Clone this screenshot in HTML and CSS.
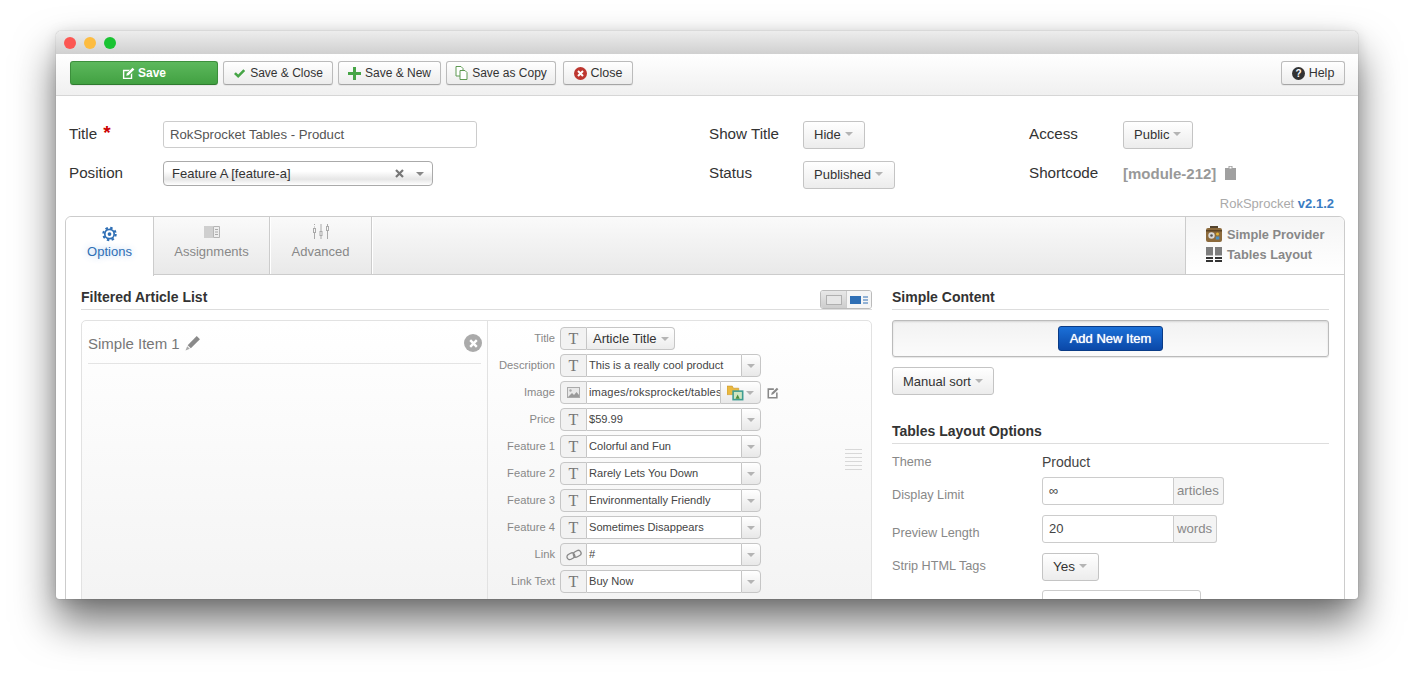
FILE: index.html
```html
<!DOCTYPE html>
<html lang="en">
<head>
<meta charset="utf-8">
<title>RokSprocket</title>
<link rel="stylesheet" href="styles.css">
</head>
<body>
<div class="window">
  <div class="titlebar"><i class="dot red"></i><i class="dot yellow"></i><i class="dot green"></i></div>
  <div class="toolbar">
    <button class="btn save"><svg width="13" height="13" viewBox="0 0 14 14"><path d="M1 3h7.500L7 4.500H2.500v7h7V8L11 6.500V13H1z" fill="#fff"/><path d="M11.400.8l1.900 1.900-6.200 6.200-2.500.6.600-2.500z" fill="#fff"/></svg>Save</button>
    <button class="btn w-sc"><svg width="13" height="11" viewBox="0 0 14 12"><path d="M1 6.500L3 4.500l2.600 2.600L11.200 1.300l2 2-7.600 7.700z" fill="#46a546"/></svg>Save &amp; Close</button>
    <button class="btn w-sn"><svg width="13" height="13" viewBox="0 0 13 13"><path d="M5 0h3v5h5v3H8v5H5V8H0V5h5z" fill="#46a546"/></svg>Save &amp; New</button>
    <button class="btn w-cp"><svg width="13" height="14" viewBox="0 0 13 14" fill="#fff" stroke="#5e9a52"><path d="M1 .5h5l2 2v7.500H1z"/><path d="M5 4.500h5l2 2v7H5z"/></svg>Save as Copy</button>
    <button class="btn w-cl"><svg width="13" height="13" viewBox="0 0 13 13"><circle cx="6.500" cy="6.500" r="6.500" fill="#bd362f"/><path d="M4 4l5 5M9 4l-5 5" stroke="#fff" stroke-width="2"/></svg>Close</button>
    <button class="btn help"><svg width="13" height="13" viewBox="0 0 13 13"><circle cx="6.500" cy="6.500" r="6.500" fill="#333"/><text x="6.500" y="10.300" class="qmark">?</text></svg>Help</button>
  </div>

  <div class="meta">
    <div class="meta-row">
      <div class="meta-cell c1"><label class="meta-label">Title <b class="star">*</b></label><div class="title-input">RokSprocket Tables - Product</div></div>
      <div class="meta-cell c2"><label class="meta-label">Show Title</label><button class="drop">Hide<i class="caret"></i></button></div>
      <div class="meta-cell"><label class="meta-label">Access</label><button class="drop">Public<i class="caret"></i></button></div>
    </div>
    <div class="meta-row row2">
      <div class="meta-cell c1"><label class="meta-label">Position</label><div class="position"><span>Feature A [feature-a]</span><svg class="pos-x" width="9" height="9" viewBox="0 0 9 9"><path d="M1 1l7 7M8 1L1 8" stroke="#777" stroke-width="2.200"/></svg><i class="caret dark"></i></div></div>
      <div class="meta-cell c2"><label class="meta-label">Status</label><button class="drop">Published<i class="caret"></i></button></div>
      <div class="meta-cell"><label class="meta-label">Shortcode</label><strong class="shortcode">[module-212]</strong><svg class="clip" width="11" height="15" viewBox="0 0 11 15"><path d="M0 3h3.500V1h4v2H11v12H0z" fill="#a0a0a0"/><path d="M4.500 1.800h2v1.700h-2z" fill="#fff"/></svg></div>
    </div>
  </div>
  <div class="version">RokSprocket <b>v2.1.2</b></div>

  <div class="tabs">
    <div class="tabbar">
      <div class="tab active">
        <svg width="15" height="15" viewBox="0 0 16 16"><circle cx="8" cy="8" r="5" fill="none" stroke="#2f6fb5" stroke-width="1.800"/><circle cx="8" cy="8" r="6.600" fill="none" stroke="#2f6fb5" stroke-width="2.200" stroke-dasharray="2.600 2.580"/><circle cx="8" cy="8" r="2" fill="#2f6fb5"/></svg>
        <span>Options</span>
      </div>
      <div class="tab t-as">
        <svg width="16" height="12" viewBox="0 0 16 12"><path d="M0 0h9v12H0z" fill="#cfcfcf"/><path d="M9.500.5h6v11h-6z" fill="#eee" stroke="#b5b5b5"/><path d="M11 3.500h3M11 6h3M11 8.500h3" stroke="#aaa"/></svg>
        <span>Assignments</span>
      </div>
      <div class="tab t-ad">
        <svg width="16" height="16" viewBox="0 0 16 16" fill="none" stroke="#aaa"><path d="M1.500 0v1M1.500 2.500v1M1.500 9v6M8 0v7M8 12v3M14.500 0v2M14.500 7v8"/><rect x="0.500" y="4.500" width="2" height="4"/><rect x="7" y="7.500" width="2" height="4"/><rect x="13.500" y="2.500" width="2" height="4"/></svg>
        <span>Advanced</span>
      </div>
      <div class="tab-fill"></div>
      <div class="providers">
        <div class="prov"><svg width="16" height="16" viewBox="0 0 16 16"><path d="M4 0h8v3H4z" fill="#54442f"/><rect y="2" width="16" height="14" rx="2" fill="#8c6a3c"/><path d="M0 4h16v1.500H0z" fill="#5a4325"/><circle cx="5.500" cy="9.500" r="3.200" fill="#d9d9d9"/><circle cx="5.500" cy="9.500" r="1.300" fill="#555"/><circle cx="11.500" cy="8" r="1.500" fill="#e2b437"/><rect x="9.800" y="10.500" width="3.500" height="3" fill="#4a8fc4"/></svg>Simple Provider</div>
        <div class="prov"><svg width="16" height="15" viewBox="0 0 16 15"><path d="M0 0h7v8.500H0zM9 0h7v8.500H9z" fill="#7d7d7d"/><path d="M0 10h7v2H0zM9 10h7v2H9zM0 13h7v2H0zM9 13h7v2H9z" fill="#333"/></svg>Tables Layout</div>
      </div>
    </div>

    <div class="tab-body">
      <section class="left">
        <div class="head">
          <h3>Filtered Article List</h3>
          <div class="views">
            <span class="view"><svg width="16" height="10" viewBox="0 0 16 10"><rect x=".5" y=".5" width="15" height="9" fill="#e6e6e6" stroke="#b0b0b0"/></svg></span>
            <span class="view on"><svg width="18" height="8" viewBox="0 0 18 8"><path d="M0 0h11v8H0z" fill="#2f6fb5"/><path d="M13 1h5M13 4h5M13 7h5" stroke="#2f6fb5"/></svg></span>
          </div>
        </div>
        <div class="item">
          <div class="item-list">
            <div class="item-head">
              <span class="item-name">Simple Item 1</span>
              <svg class="pencil" width="16" height="16" viewBox="0 0 15 15"><path d="M11 1l3 3-8.500 8.500-3-3z" fill="#8a8a8a"/><path d="M2 10.500l2.500 2.500L0.500 14.500z" fill="#aaa"/></svg>
              <span class="item-x"><svg width="9" height="9" viewBox="0 0 9 9"><path d="M1.200 1.200l6.600 6.600M7.800 1.200L1.200 7.800" stroke="#fff" stroke-width="2.400"/></svg></span>
            </div>
          </div>
          <div class="fields">
            <div class="field"><label>Title</label><span class="addon">T</span><span class="pick">Article Title<i class="caret"></i></span></div>
            <div class="field"><label>Description</label><span class="addon">T</span><span class="val">This is a really cool product</span><span class="more"><i class="caret"></i></span></div>
            <div class="field"><label>Image</label><span class="addon"><svg width="13" height="11" viewBox="0 0 13 11"><rect width="13" height="11" fill="#aaa"/><rect x="1" y="1" width="11" height="9" fill="#e8e8e8"/><path d="M1 10l4-4 2 2 2.500-3L12 8v2z" fill="#999"/><circle cx="3.500" cy="3.500" r="1.200" fill="#aaa"/></svg></span><span class="val short">images/roksprocket/tables</span><span class="more wide"><svg width="17" height="16" viewBox="0 0 16 15"><path d="M0 1h5l1 2h5v6H0z" fill="#eab93f" stroke="#c9962a" stroke-width=".6"/><rect x="5" y="5" width="10.500" height="9.500" fill="#3f9d92"/><rect x="6.500" y="6.500" width="7.500" height="6.500" fill="#cfe6c2"/><path d="M8 13l2-4 2 4z" fill="#4d8f3d"/></svg><i class="caret"></i></span><svg class="edit" width="12" height="12" viewBox="0 0 14 14"><path d="M8 2.500H1.500v10h10V6.500" fill="none" stroke="#888" stroke-width="1.800"/><path d="M11.500.8l1.800 1.800-6 6-2.400.6.600-2.400z" fill="#888"/></svg></div>
            <div class="field"><label>Price</label><span class="addon">T</span><span class="val">$59.99</span><span class="more"><i class="caret"></i></span></div>
            <div class="field"><label>Feature 1</label><span class="addon">T</span><span class="val">Colorful and Fun</span><span class="more"><i class="caret"></i></span></div>
            <div class="field"><label>Feature 2</label><span class="addon">T</span><span class="val">Rarely Lets You Down</span><span class="more"><i class="caret"></i></span></div>
            <div class="field"><label>Feature 3</label><span class="addon">T</span><span class="val">Environmentally Friendly</span><span class="more"><i class="caret"></i></span></div>
            <div class="field"><label>Feature 4</label><span class="addon">T</span><span class="val">Sometimes Disappears</span><span class="more"><i class="caret"></i></span></div>
            <div class="field"><label>Link</label><span class="addon"><svg width="16" height="12" viewBox="0 0 16 12" fill="none" stroke="#888" stroke-width="1.300"><rect x="0.800" y="4.500" width="8" height="5.500" rx="2.700" transform="rotate(-30 4.800 7.200)"/><rect x="7.200" y="2" width="8" height="5.500" rx="2.700" transform="rotate(-30 11.200 4.800)"/></svg></span><span class="val">#</span><span class="more"><i class="caret"></i></span></div>
            <div class="field"><label>Link Text</label><span class="addon">T</span><span class="val">Buy Now</span><span class="more"><i class="caret"></i></span></div>
          </div>
          <div class="grip"></div>
        </div>
      </section>

      <section class="right">
        <div class="head"><h3>Simple Content</h3></div>
        <div class="add-well"><button class="add-btn">Add New Item</button></div>
        <button class="drop sort">Manual sort<i class="caret"></i></button>
        <div class="head opts"><h3>Tables Layout Options</h3></div>
        <div class="opt o-theme"><label>Theme</label><span class="opt-text">Product</span></div>
        <div class="opt o-limit"><label>Display Limit</label><span class="group"><span class="g-input">∞</span><span class="g-add">articles</span></span></div>
        <div class="opt o-prev"><label>Preview Length</label><span class="group"><span class="g-input">20</span><span class="g-add">words</span></span></div>
        <div class="opt o-strip"><label>Strip HTML Tags</label><button class="drop big">Yes<i class="caret"></i></button></div>
        <div class="opt o-last"><label></label><span class="g-input last"></span></div>
      </section>
    </div>
  </div>
</div>
</body>
</html>
```

FILE: styles.css
```css
* { box-sizing: border-box; }
html, body { margin: 0; height: 679px; overflow: hidden; background: #fff; }
body { padding: 31px 56px 0; font-family: "Liberation Sans", Arial, sans-serif; color: #444; font-size: 13px; }
button { font-family: inherit; margin: 0; }

.window { width: 1302px; height: 568px; overflow: hidden; background: #fff; border-radius: 5px 5px 3px 3px;
  box-shadow: 0 0 1px rgba(0,0,0,.45), 0 23px 42px rgba(0,0,0,.56), 0 2px 14px rgba(0,0,0,.12); }

.titlebar { height: 23px; display: flex; align-items: center; gap: 8px; padding: 0 8px; background: linear-gradient(#ededed, #d0d0d0); }
.dot { width: 12px; height: 12px; border-radius: 50%; }
.red { background: #fc5753; }
.yellow { background: #fdbc40; }
.green { background: #19c332; }

.toolbar { height: 42px; display: flex; align-items: flex-start; gap: 5px; padding: 7px 13px 0 14px; background: linear-gradient(#fff, #f0f0f0); border-bottom: 1px solid #d6d6d6; }
.btn { height: 24px; padding: 0; display: flex; align-items: center; justify-content: center; gap: 4px; font-size: 12.500px; color: #333; background: linear-gradient(#fff, #ececec); border: 1px solid #bbb; border-bottom-color: #a5a5a5; border-radius: 3px; box-shadow: 0 1px 1px rgba(0,0,0,.06); }
.save { width: 148px; color: #fff; font-weight: 700; font-size: 12px; background: linear-gradient(#5cb85c, #42a142); border-color: #3c8f3c; border-bottom-color: #2f7a2f; gap: 3px; }
.w-sc { width: 110px; font-size: 12px; }
.w-sn { width: 103px; font-size: 12px; }
.w-cp { width: 110px; font-size: 12px; }
.w-cl { width: 70px; margin-left: 2px; }
.help { width: 64px; margin-left: auto; }
.qmark { font: 700 10px "Liberation Sans", sans-serif; fill: #fff; text-anchor: middle; }

.meta { padding: 25px 0 0 13px; height: 100px; }
.meta-row { display: flex; align-items: flex-start; height: 28px; }
.row2 { margin-top: 12px; }
.meta-cell { display: flex; align-items: flex-start; width: 320px; }
.c1 { width: 640px; }
.meta-label { width: 94px; font-size: 15.200px; line-height: 26px; color: #333; }
.row2 .meta-label { line-height: 24px; }
.star { color: #c00; font-size: 19px; line-height: 10px; margin-left: 2px; }
.title-input { width: 314px; height: 27px; line-height: 25px; padding: 0 6px; border: 1px solid #ccc; border-radius: 3px; font-size: 13.200px; color: #555; }
.drop { height: 28px; padding: 0 11px 2px 10px; display: inline-flex; align-items: center; font-size: 13px; color: #333; background: linear-gradient(#fff, #ececec); border: 1px solid #c4c4c4; border-radius: 3px; }
.caret { display: inline-block; width: 0; height: 0; margin-left: 4px; border: 4px solid transparent; border-top-color: #b4b4b4; border-bottom: 0; }
.caret.dark { border-top-color: #888; }
.position { width: 270px; height: 25px; display: flex; align-items: center; padding: 0 8px; font-size: 13px; color: #333; border: 1px solid #aaa; border-radius: 4px; background: linear-gradient(#fff 40%, #e6e6e6 75%, #fff); }
.position span { flex: 1; }
.pos-x { margin-right: 8px; }
.shortcode { color: #999; font-size: 15px; line-height: 26px; }
.clip { margin: 4px 0 0 9px; }
.version { height: 0; text-align: right; padding-right: 24px; margin-top: -1px; font-size: 13px; line-height: 16px; color: #aaa; transform: translateY(1px); }
.version b { color: #3a7cc2; }

.tabs { margin: 21px 13px 0 9px; height: 400px; border: 1px solid #ccc; border-radius: 6px 6px 0 0; }
.tabbar { height: 58px; display: flex; background: linear-gradient(#fafafa, #e9e9e9); border-bottom: 1px solid #ccc; border-radius: 6px 6px 0 0; }
.tab { display: flex; flex-direction: column; align-items: center; justify-content: flex-end; gap: 2px; padding-bottom: 15px; font-size: 13px; color: #888; border-right: 1px solid #ccc; box-shadow: 1px 0 0 #fff; margin-right: 1px; }
.tab svg { height: 16px; margin-bottom: 2px; }
.tab.active { width: 88px; height: 59px; padding-bottom: 17px; background: #fff; color: #2f6fb5; text-shadow: 0 0 6px rgba(70,140,220,.45); border-radius: 6px 0 0 0; margin-right: 0; box-shadow: none; }
.tab.active svg { margin-bottom: 0; }
.t-as { width: 116px; }
.t-ad { width: 101px; padding-right: 1px; }
.tab-fill { flex: 1; }
.providers { width: 159px; padding: 7px 0 0 20px; background: linear-gradient(#f5f5f5, #fff); border-left: 1px solid #ccc; border-radius: 0 6px 0 0; font-weight: 700; color: #888; font-size: 12.800px; }
.prov { display: flex; align-items: center; gap: 5px; height: 20px; }

.tab-body { display: flex; gap: 20px; padding: 0 15px; }
.left { width: 791px; }
.right { width: 437px; }
.head { height: 35px; display: flex; align-items: flex-end; justify-content: space-between; border-bottom: 1px solid #ddd; padding-bottom: 3px; }
h3 { margin: 0; font-size: 14px; line-height: 18px; color: #333; }
.views { display: flex; height: 19px; border: 1px solid #bbb; border-radius: 3px; overflow: hidden; margin-bottom: -3px; }
.view { width: 25px; display: flex; align-items: center; justify-content: center; background: linear-gradient(#e8e8e8, #cdcdcd); }
.view.on { background: #f5f5f5; border-left: 1px solid #ccc; }

.item { position: relative; margin-top: 10px; height: 300px; display: flex; border: 1px solid #e2e2e2; border-radius: 5px 5px 0 0; background: linear-gradient(#fff, #f3f3f3); }
.item-list { width: 406px; padding: 0 6px; border-right: 1px solid #e2e2e2; }
.item-head { height: 43px; padding-top: 2px; display: flex; align-items: center; gap: 5px; border-bottom: 1px solid #e4e4e4; }
.item-name { font-size: 15px; color: #777; }
.item-x { width: 18px; height: 18px; margin-left: auto; margin-right: -1px; border-radius: 50%; background: #aaa; display: flex; align-items: center; justify-content: center; }
.fields { padding-top: 6px; }
.field { height: 23px; margin-bottom: 4px; display: flex; align-items: center; }
.field label { width: 67px; margin-right: 5px; padding-bottom: 2px; text-align: right; font-size: 11.200px; color: #888; }
.addon { width: 27px; height: 23px; display: flex; align-items: center; justify-content: center; font-family: "Liberation Serif", serif; font-size: 16px; color: #777; background: #f2f2f2; border: 1px solid #c6c6c6; border-radius: 4px 0 0 4px; }
.pick { height: 23px; padding: 0 5px 0 6px; display: flex; align-items: center; font-size: 13px; color: #333; background: linear-gradient(#fff, #ececec); border: 1px solid #c6c6c6; border-left: 0; border-radius: 0 4px 4px 0; }
.val { width: 154px; height: 23px; line-height: 21px; padding-left: 2px; font-size: 11.100px; color: #444; white-space: nowrap; overflow: hidden; background: #fff; border-top: 1px solid #c6c6c6; border-bottom: 1px solid #c6c6c6; }
.val.short { width: 133px; letter-spacing: .15px; }
.more { width: 20px; height: 23px; display: flex; align-items: center; justify-content: center; background: linear-gradient(#fff, #e8e8e8); border: 1px solid #c6c6c6; border-radius: 0 4px 4px 0; }
.more .caret { margin-left: 0; }
.more.wide { width: 41px; gap: 2px; }
.edit { margin-left: 6px; }
.grip { position: absolute; right: 9px; top: 128px; width: 17px; height: 22px; background: repeating-linear-gradient(#d8d8d8 0 1px, transparent 1px 4px); }

.add-well { margin-top: 10px; height: 37px; display: flex; align-items: center; justify-content: center; border: 1px solid #bbb; border-radius: 3px; background: linear-gradient(#f2f2f2, #fbfbfb); box-shadow: inset 0 1px 2px rgba(0,0,0,.12), 0 1px 1px rgba(0,0,0,.1); }
.add-btn { width: 105px; height: 25px; padding: 0; color: #fff; font-size: 13px; font-weight: 400; text-shadow: 0 0 1px #fff; background: linear-gradient(#1b70d8, #0b48a8); border: 1px solid #0a3b86; border-radius: 3px; }
.sort { display: flex; margin-top: 10px; padding: 0 10px; }
.opts { height: 49px; }
.opt { display: flex; align-items: center; }
.opt label { width: 150px; font-size: 12.700px; color: #888; }
.opt-text { font-size: 14px; color: #444; }
.o-theme { height: 32px; padding-top: 3px; }
.o-limit { height: 28px; margin-top: 1px; }
.o-limit label { padding-top: 8px; }
.o-prev { height: 28px; margin-top: 10px; }
.o-prev label { padding-top: 8px; }
.o-strip { height: 28px; margin-top: 10px; }
.o-strip label { padding-bottom: 2px; }
.o-last { height: 28px; margin-top: 9px; }
.group { display: flex; }
.g-input { width: 132px; height: 28px; line-height: 26px; padding: 0 6px; font-size: 13px; color: #444; border: 1px solid #ccc; border-radius: 3px 0 0 3px; }
.g-input.last { width: 159px; border-radius: 3px; }
.g-add { padding: 0 4px 0 3px; height: 28px; line-height: 26px; font-size: 13.200px; color: #888; background: #f4f4f4; border: 1px solid #ccc; border-left: 0; border-radius: 0 3px 3px 0; }
.big { font-size: 13.500px; }
```
